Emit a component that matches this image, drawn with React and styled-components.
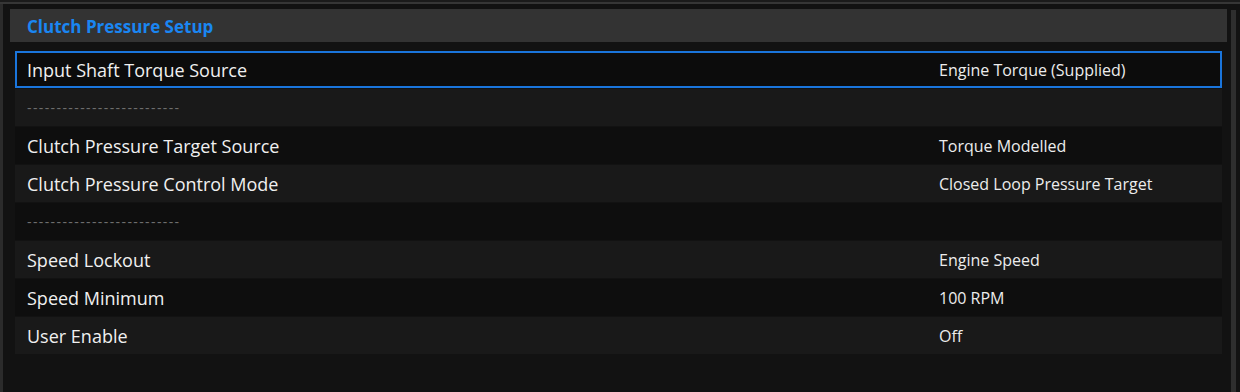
import React from 'react'
import styled, { createGlobalStyle } from 'styled-components'

const rows = [
  { label: 'Input Shaft Torque Source', value: 'Engine Torque (Supplied)', selected: true },
  { separator: true },
  { label: 'Clutch Pressure Target Source', value: 'Torque Modelled' },
  { label: 'Clutch Pressure Control Mode', value: 'Closed Loop Pressure Target' },
  { separator: true },
  { label: 'Speed Lockout', value: 'Engine Speed' },
  { label: 'Speed Minimum', value: '100 RPM' },
  { label: 'User Enable', value: 'Off' },
]

function App() {
  return (
    <>
      <GlobalStyle />
      <Screen>
        <TopRule />
        <Body>
          <LeftRail />
          <Panel>
            <Header>
              <Title>Clutch Pressure Setup</Title>
            </Header>
            <RowList>
              {rows.map((row, i) => (
                <Row key={i} $light={i % 2 === 1} $selected={row.selected}>
                  {row.separator ? (
                    <Dashes>--------------------------</Dashes>
                  ) : (
                    <>
                      <Label>{row.label}</Label>
                      <Value>{row.value}</Value>
                    </>
                  )}
                </Row>
              ))}
            </RowList>
          </Panel>
          <ScrollBar />
        </Body>
      </Screen>
    </>
  )
}

const GlobalStyle = createGlobalStyle`
  html, body {
    margin: 0;
    padding: 0;
    background: #121212;
  }
`

const Screen = styled.div`
  width: 1240px;
  height: 392px;
  display: flex;
  flex-direction: column;
  background: #121212;
  overflow: hidden;
  font-family: 'Open Sans', 'Noto Sans', sans-serif;
`

const TopRule = styled.div`
  height: 2px;
  flex: none;
  border-top: 2px solid #1b1b1b;
  background: #363636;
`

const Body = styled.div`
  flex: 1;
  display: flex;
`

const LeftRail = styled.div`
  width: 3px;
  flex: none;
  background: #2b2b2b;
  margin-right: 7px;
`

const Panel = styled.div`
  width: 1217px;
  flex: none;
  padding-top: 5px;
`

const Header = styled.div`
  height: 33px;
  box-sizing: border-box;
  background: #333333;
  display: flex;
  align-items: center;
  padding: 2px 0 0 17px;
`

const Title = styled.span`
  color: #1a86f2;
  font-weight: 700;
  font-size: 17px;
`

const RowList = styled.div`
  display: flex;
  flex-direction: column;
  gap: 1px;
  margin: 9px 5px 0;
`

const Row = styled.div`
  height: 37px;
  box-sizing: border-box;
  display: grid;
  grid-template-columns: 912px 1fr;
  align-items: center;
  background: ${(p) => (p.$selected ? '#0c0c0c' : p.$light ? '#191919' : '#0e0e0e')};
  border: ${(p) => (p.$selected ? '2px solid #1a75dc' : 'none')};
  padding-left: ${(p) => (p.$selected ? '10px' : '12px')};
`

const Label = styled.span`
  color: #f0f0f0;
  font-size: 18px;
`

const Value = styled.span`
  color: #ececec;
  font-size: 16px;
`

const Dashes = styled.span`
  color: #6e6e6e;
  font-size: 14px;
  letter-spacing: 1.4px;
  grid-column: 1 / -1;
`

const ScrollBar = styled.div`
  width: 5px;
  flex: none;
  margin: 6px 0 0 4px;
  background: #2e2e2e;
`

export default App
